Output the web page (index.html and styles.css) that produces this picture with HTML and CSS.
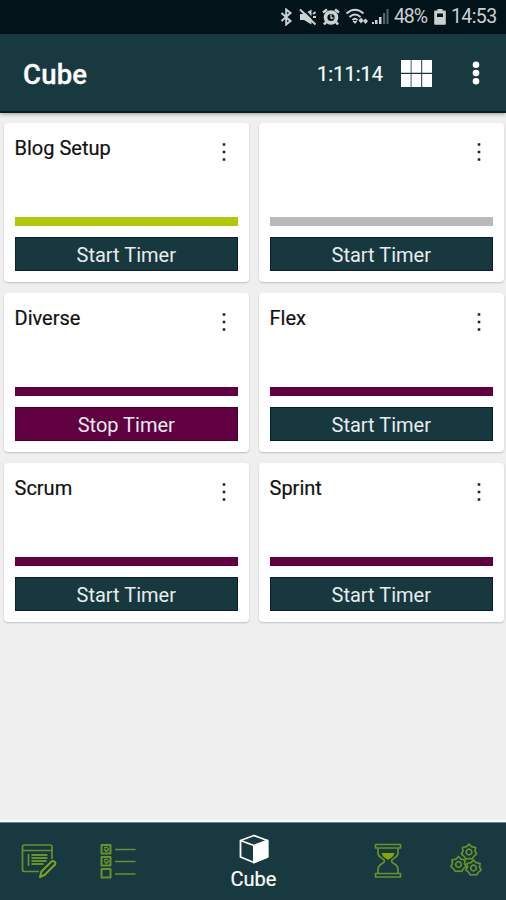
FILE: index.html
```
<!DOCTYPE html>
<html lang="en">
<head>
<meta charset="utf-8">
<title>Cube</title>
<link rel="stylesheet" href="styles.css">
</head>
<body>
<div class="status">
  <svg class="bluetooth" width="13" height="18" viewBox="0 0 13 18"><path d="M1.500 5l9 8L6.200 16.500v-15L10.500 5l-9 8"/></svg>
  <svg class="mute" width="18" height="18" viewBox="0 0 18 18"><path class="fill" d="M1 6h4L12.500 1.500v15L5 12H1z"/><path class="cut" d="M2.500-.5l16 16"/><path d="M1 1.500l15.500 15M14 6l2.500-2M14 9h3"/></svg>
  <svg class="alarm" width="18" height="18" viewBox="0 0 18 18"><circle class="fill" cx="9" cy="9.500" r="7.300"/><path class="thick" d="M1 4.500l4-3M17 4.500l-4-3M4 14l-2 2.500M14 14l2 2.500"/><circle class="hole" cx="9" cy="9.500" r="3.600"/><path class="thin" d="M9 6.500v3.500h2.500"/></svg>
  <svg class="wifi" width="24" height="18" viewBox="0 0 24 18"><path d="M1.500 5.500Q10-2 18.500 5.500M4.500 9Q10 4 15.500 9M7.500 12q2.500-2.500 5 0"/><path class="fill" d="M7.500 13h5L10 16zM13.500 12.500l2.500-3 2.500 3-2.500 3zM18 13l2.500-2.500L23 13l-2.500 3z"/></svg>
  <svg class="signal" width="17" height="18" viewBox="0 0 17 18"><path class="fill" d="M0 14h2v2H0zM3 12h2.500v4H3zM7 9h2.500v7H7z"/><path class="dim" d="M11 5h2.200v11H11zM14.500 1H16.500v15h-2z"/></svg>
  <span class="battery-level">48%</span>
  <svg class="battery" width="12" height="18" viewBox="0 0 12 18"><path class="fill" d="M3.500 1h5v1.500H11q.8 0 .8.800V16q0 .8-.8.800H1q-.8 0-.8-.8V3.300q0-.8.800-.8h2.500z"/><path class="hole" d="M3 5.500h6v3.500H3z"/></svg>
  <span class="clock">14:53</span>
</div>
<header class="appbar">
  <h1>Cube</h1>
  <span class="elapsed">1:11:14</span>
  <svg class="grid-icon" width="31" height="27" viewBox="0 0 31 27"><path d="M0 0h9.700v12.800H0zM10.500 0h9.700v12.800h-9.700zM21.200 0H31v12.800h-9.800zM0 14h9.700v13H0zM10.500 14h9.700v13h-9.700zM21.200 14H31v13h-9.800z"/></svg>
  <svg class="more" width="8" height="24" viewBox="0 0 8 24"><circle cx="4" cy="3.700" r="3.300"/><circle cx="4" cy="12" r="3.300"/><circle cx="4" cy="20.300" r="3.300"/></svg>
</header>
<main class="board">
  <section class="card"><div class="head"><h2>Blog Setup</h2><svg class="menu" width="4" height="20" viewBox="0 0 4 20"><path d="M.7 1.200h2.600v2.600H.7zM.7 8.700h2.600v2.600H.7zM.7 16.200h2.600v2.600H.7z"/></svg></div><div class="bar lime"></div><button>Start Timer</button></section>
  <section class="card"><div class="head"><h2></h2><svg class="menu" width="4" height="20" viewBox="0 0 4 20"><path d="M.7 1.200h2.600v2.600H.7zM.7 8.700h2.600v2.600H.7zM.7 16.200h2.600v2.600H.7z"/></svg></div><div class="bar gray"></div><button>Start Timer</button></section>
  <section class="card"><div class="head"><h2>Diverse</h2><svg class="menu" width="4" height="20" viewBox="0 0 4 20"><path d="M.7 1.200h2.600v2.600H.7zM.7 8.700h2.600v2.600H.7zM.7 16.200h2.600v2.600H.7z"/></svg></div><div class="bar plum"></div><button class="stop">Stop Timer</button></section>
  <section class="card"><div class="head"><h2>Flex</h2><svg class="menu" width="4" height="20" viewBox="0 0 4 20"><path d="M.7 1.200h2.600v2.600H.7zM.7 8.700h2.600v2.600H.7zM.7 16.200h2.600v2.600H.7z"/></svg></div><div class="bar plum"></div><button>Start Timer</button></section>
  <section class="card"><div class="head"><h2>Scrum</h2><svg class="menu" width="4" height="20" viewBox="0 0 4 20"><path d="M.7 1.200h2.600v2.600H.7zM.7 8.700h2.600v2.600H.7zM.7 16.200h2.600v2.600H.7z"/></svg></div><div class="bar plum"></div><button>Start Timer</button></section>
  <section class="card"><div class="head"><h2>Sprint</h2><svg class="menu" width="4" height="20" viewBox="0 0 4 20"><path d="M.7 1.200h2.600v2.600H.7zM.7 8.700h2.600v2.600H.7zM.7 16.200h2.600v2.600H.7z"/></svg></div><div class="bar plum"></div><button>Start Timer</button></section>
</main>
<nav class="tabs">
  <a class="tab"><svg width="36" height="36" viewBox="0 0 36 36"><path d="M18 28.500H3.500Q1.500 28.500 1.500 26.500V4Q1.500 2 3.500 2H29Q31 2 31 4V16M1.500 7.500H31M7.500 11v12"/><path class="rows" d="M10.500 12h16M10.500 15h16M10.500 18h15M10.500 21h12"/><path class="pencil" d="M19 34l1.500-5.500L30.500 18.500q1.500-1 3 .3t.3 3L23.500 32z"/></svg></a>
  <a class="tab"><svg width="36" height="36" viewBox="0 0 36 36"><path class="box" d="M1.500 2h9v8.500h-9zM1.500 14h9v8.500h-9zM1.500 26h9v8.500h-9z"/><path d="M15 6.500h20.500M15 18.500h20.500M15 31h20.500M4 6l2.500 2.500L9 5.500M4 18l2.500 2.500L9 17.500M4 4.500h4M4 16.500h4"/></svg></a>
  <a class="tab active"><svg width="30" height="30" viewBox="0 0 30 30"><path d="M1.500 6.500L15 1.500l13.500 5V23L15 28.500 1.500 23zM1.500 6.500L15 11.500l13.500-5M15 12v16.500"/><path class="face" d="M15 12l13.500-5.500V23L15 28.500z"/></svg><span>Cube</span></a>
  <a class="tab"><svg width="28" height="36" viewBox="0 0 28 36"><path d="M1.500 1.500h25v3.500h-25zM1.500 30.500h25V34h-25zM4 5v5q0 3 3.500 5 3 1.500 3 3t-3 3Q4 23 4 27v3.500M24 5v5q0 3-3.500 5-3 1.500-3 3t3 3q3.500 2 3.500 6v3.500"/><path class="sand" d="M7.500 10h13q-.5 3-3.500 5-2 1-3 2-1-1-3-2-3-2-3.500-5z"/></svg></a>
  <a class="tab"><svg width="32" height="34" viewBox="0 0 32 34"><defs><g id="cog"><path d="M0-7.800L2.500-5.400 6.600-4.500 6-1 7.600 2.200 5 4.200 3 7 0 6.500-3 7-5 4.200-7.600 2.200-6-1-6.600-4.500-2.500-5.400z"/><circle r="2.800"/></g></defs><use href="#cog" x="19" y="9"/><use href="#cog" x="8.500" y="21.500"/><use href="#cog" x="23.500" y="25"/></svg></a>
</nav>
</body>
</html>
```
FILE: styles.css
```
* { box-sizing: border-box; }
body {
  margin: 0;
  height: 900px;
  display: flex;
  flex-direction: column;
  background: #efefef;
  font-family: Roboto, sans-serif;
  overflow: hidden;
}
svg { display: block; flex: none; }
h1, h2 { margin: 0; }

.status {
  height: 34px;
  flex: none;
  display: flex;
  align-items: center;
  padding-left: 280px;
  background: #02131a;
  color: #cbd0d2;
  font-size: 19.5px;
  line-height: 36px;
  white-space: nowrap;
}
.status svg { fill: none; stroke: #cbd0d2; stroke-width: 2; }
.status .fill { fill: #cbd0d2; stroke: none; }
.status .hole { fill: #02131a; stroke: none; }
.status .cut { stroke: #02131a; }
.status .thin { stroke-width: 1.3; }
.status .thick { stroke-width: 2.6; }
.status .dim { fill: #53636a; stroke: none; }
.mute { margin-left: 6px; }
.alarm { margin-left: 5px; }
.wifi { margin-left: 5px; }
.signal { margin-left: 3px; }
.battery-level { width: 34px; margin-left: 5px; letter-spacing: -1.1px; }
.battery { margin-left: 6px; }
.clock { margin-left: 5px; letter-spacing: -0.6px; }

.appbar {
  height: 79px;
  flex: none;
  display: flex;
  align-items: center;
  padding: 1px 26px 0 23px;
  background: #18393f;
  border-bottom: 2px solid #071c22;
  box-shadow: 0 1px 4px rgba(0, 0, 0, .35);
  color: #fff;
}
.appbar h1 {
  flex: 1;
  font-size: 27.5px;
  font-weight: 500;
  line-height: 36px;
  padding-top: 3px;
  letter-spacing: .2px;
  -webkit-text-stroke: .3px #fff;
}
.elapsed { font-size: 20px; padding-top: 1px; -webkit-text-stroke: .2px #fff; }
.appbar svg { fill: #fff; }
.grid-icon { margin-left: 18px; }
.more { margin-left: 40px; }

.board {
  flex: 1;
  display: grid;
  grid-template-columns: 245px 245px;
  grid-auto-rows: 159px;
  gap: 11px 10px;
  padding: 10px 2px 0 4px;
}
.card {
  display: flex;
  flex-direction: column;
  padding: 11px 11px 11px 10.500px;
  background: #fff;
  border-radius: 4px;
  box-shadow: 0 1px 2px rgba(0, 0, 0, .2);
}
.head { display: flex; justify-content: space-between; flex: 1; }
.card h2 {
  font-size: 20px;
  font-weight: 400;
  line-height: 28px;
  color: #111;
  -webkit-text-stroke: .2px #111;
}
.menu { margin: 8px 12px 0 0; fill: #222; }
.bar { height: 9px; margin-bottom: 11px; }
.lime { background: #afca05; }
.gray { background: #b9b9b9; }
.plum { background: #600041; }
button {
  height: 34px;
  padding: 1px 0 0;
  border: 1px solid #082027;
  border-radius: 0;
  background: #17383e;
  color: #e7ecee;
  font: 400 20px/32px Roboto, sans-serif;
}
.stop { background: #600041; border-color: #48002f; }

.tabs {
  height: 78px;
  flex: none;
  display: grid;
  grid-template-columns: 78px 79px 193px 76px 80px;
  background: #18393f;
  border-top: 1px solid #71878b;
  box-shadow: 0 -2px 1px #fafafa;
}
.tab {
  display: flex;
  flex-direction: column;
  align-items: center;
  padding-top: 20px;
  color: #fff;
}
.tab svg { fill: none; stroke: #67912c; stroke-width: 1.7; stroke-linejoin: round; }
.tab .rows { stroke-width: 2; }
.tab .box { stroke-width: 2; }
.tab .pencil { stroke: #80a323; stroke-width: 2; }
.tab .sand { fill: #85a700; stroke: none; }
.active { padding-top: 11px; }
.active svg { stroke: #fff; stroke-width: 1.8; }
.active .face { fill: #fff; }
.active span { font-size: 20px; line-height: 28px; margin-top: 1px; -webkit-text-stroke: .2px #fff; }
```
